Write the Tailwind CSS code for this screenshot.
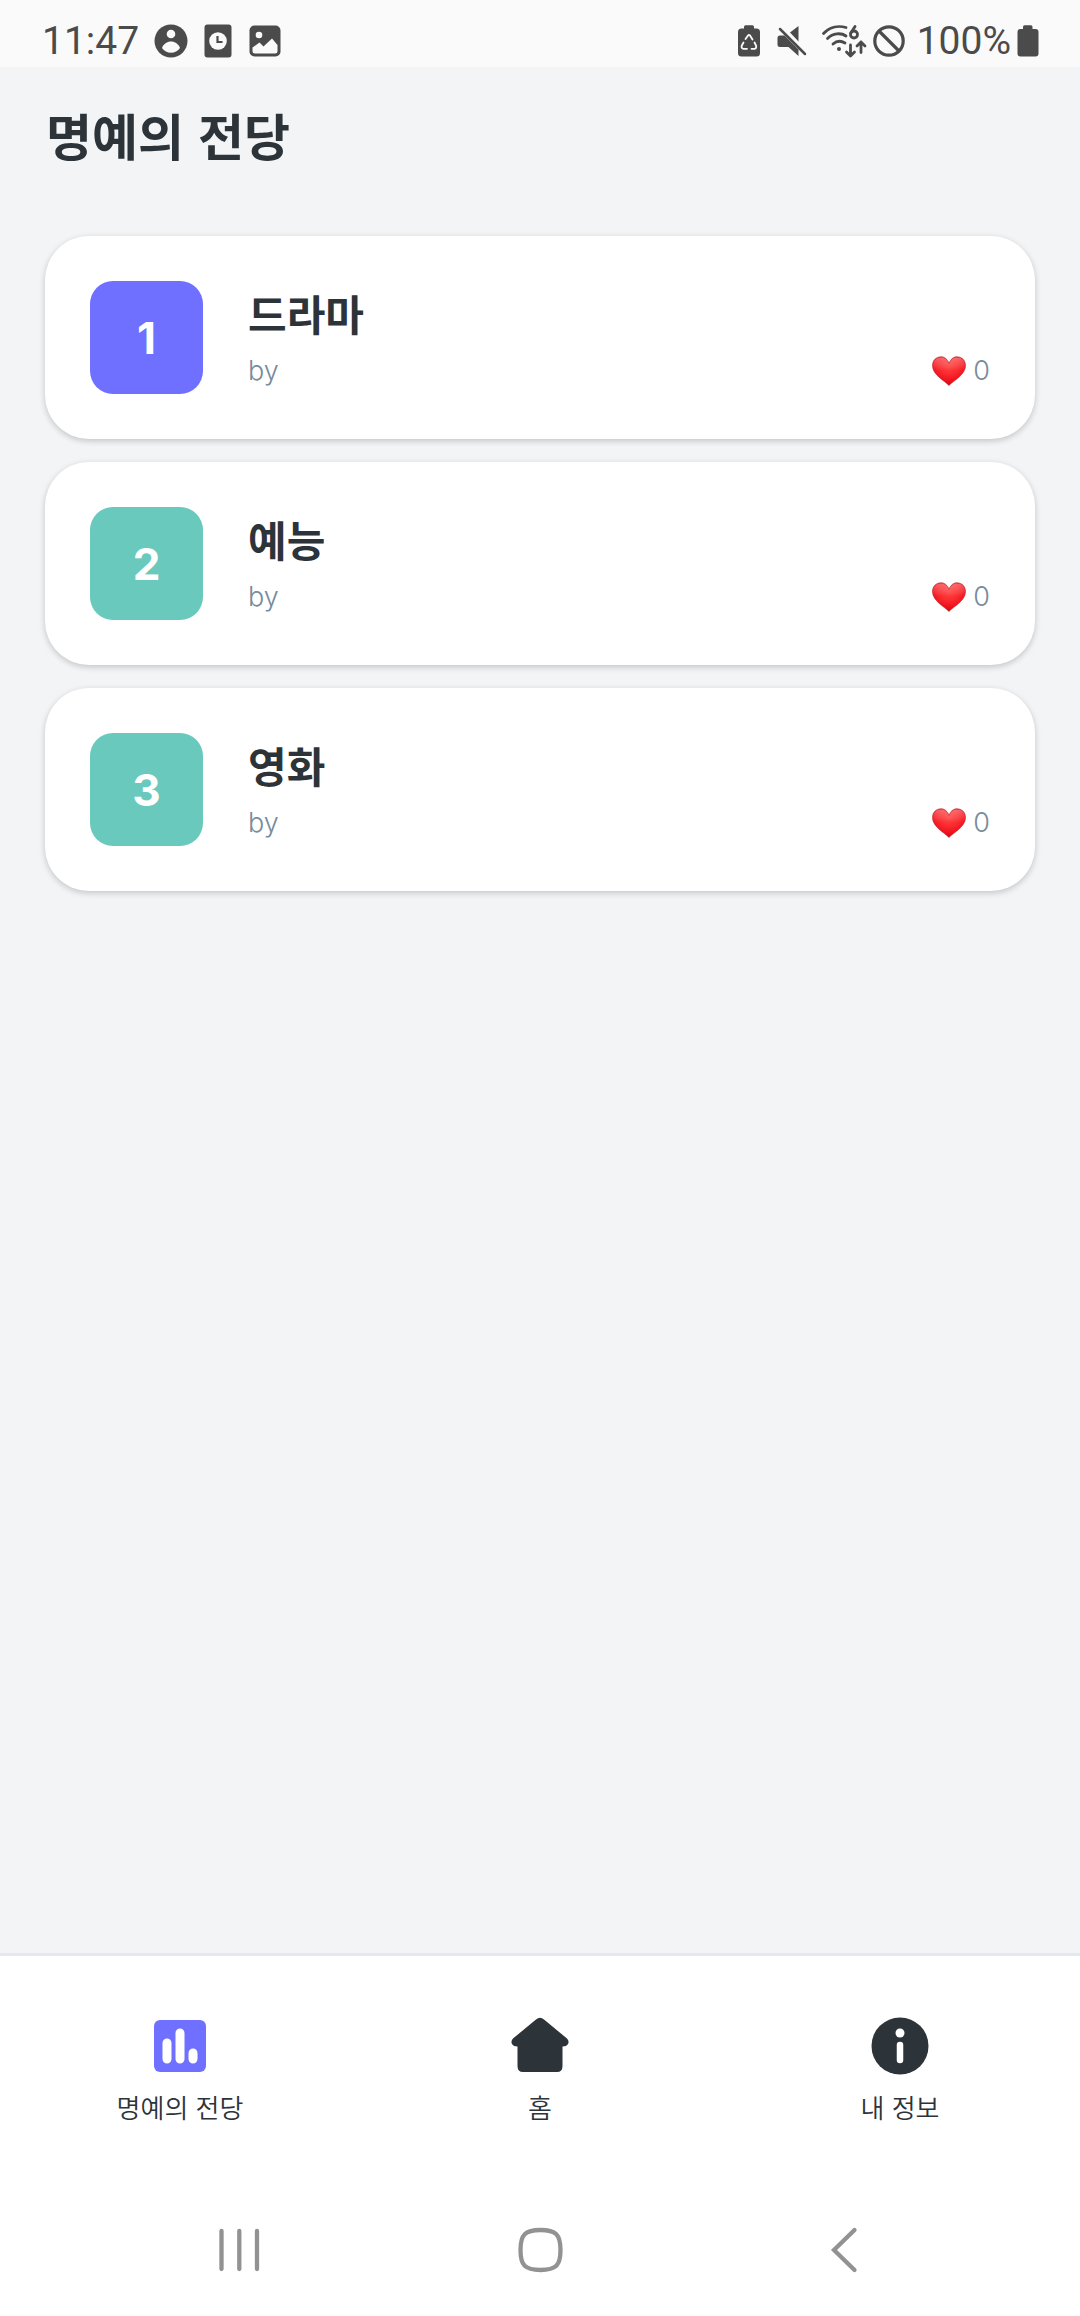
<!DOCTYPE html>
<html lang="ko">
<head>
<meta charset="utf-8">
<meta name="viewport" content="width=device-width, initial-scale=1">
<title>명예의 전당</title>
<script src="https://cdn.jsdelivr.net/npm/@tailwindcss/browser@4"></script>
</head>
<body class="flex min-h-screen flex-col bg-[#f3f4f6] font-['Noto_Sans_CJK_KR',sans-serif] text-[#2d3439]">
  <svg class="absolute size-0" aria-hidden="true">
    <defs>
      <radialGradient id="heartFill" cx="50%" cy="30%" r="75%">
        <stop offset="0" stop-color="#ff4545"/>
        <stop offset=".4" stop-color="#fa2c30"/>
        <stop offset=".75" stop-color="#ee0d1a"/>
        <stop offset="1" stop-color="#a80d12"/>
      </radialGradient>
      <linearGradient id="heartShine" x1="0" y1="0" x2="0" y2="1">
        <stop offset="0" stop-color="#fff" stop-opacity=".3"/>
        <stop offset=".45" stop-color="#fff" stop-opacity="0"/>
      </linearGradient>
      <symbol id="heart" viewBox="0 0 34 30">
        <path d="M17 29.500C13 25 .5 19 .5 9.500C.5 4.500 4 .8 9 .8C12.500 .8 15.500 3 17 7.500C18.500 3 21.500 .8 25 .8C30 .8 33.500 4.500 33.500 9.500C33.500 19 21 25 17 29.500Z" fill="url(#heartFill)" stroke="#b5282b" stroke-opacity=".7" stroke-width=".9"/>
        <path d="M17 29.500C13 25 1 19 1 9.500C1 4.500 4 1.500 9 1.500C12.500 1.500 15.500 3.500 17 8.500C18.500 3.500 21.500 1.500 25 1.500C30 1.500 33 4.500 33 9.500C33 19 21 25 17 29.500Z" fill="url(#heartShine)"/>
      </symbol>
    </defs>
  </svg>

  <div class="flex h-[67px] items-center justify-between bg-[#fafafa] pt-3.5 pr-[41px] pl-[42px] font-['Roboto',sans-serif] text-[39px] leading-[52px] text-[#4b4b4b]">
    <div class="flex items-center">
      <time class="w-[112px]">11:47</time>
      <svg class="h-[34px] w-[34px]" viewBox="0 0 34 34" fill="#4b4b4b" aria-hidden="true">
        <circle cx="17" cy="17" r="16.500"/>
        <circle cx="17" cy="10" r="4.300" fill="#fafafa"/>
        <path d="M8 24C9.500 20 13 17.500 17 17.500S24.500 20 26 24C24 27 20.500 28.800 17 28.800S10 27 8 24Z" fill="#fafafa"/>
      </svg>
      <svg class="ml-4 h-[34px] w-[28px]" viewBox="0 0 28 34" fill="#4b4b4b" aria-hidden="true">
        <rect x=".5" y=".5" width="27" height="33" rx="3"/>
        <circle cx="14" cy="17" r="8.800" fill="#fafafa"/>
        <path d="M13.500 12v6h5" fill="none" stroke="#4b4b4b" stroke-width="2.200"/>
      </svg>
      <svg class="ml-[17px] h-[32px] w-[32px]" viewBox="0 0 32 32" fill="#4b4b4b" aria-hidden="true">
        <rect x=".5" y=".5" width="31" height="31" rx="5"/>
        <circle cx="10" cy="10" r="3.300" fill="#fafafa"/>
        <path d="M3.500 22.500L10.500 17.500L14.500 21.500L23 13.500L28.500 20V26Q28.500 28.500 26 28.500H6Q3.500 28.500 3.500 26Z" fill="#fafafa"/>
      </svg>
    </div>
    <div class="flex items-center">
      <svg class="h-[32px] w-[22px]" viewBox="0 0 22 32" fill="#4b4b4b" aria-hidden="true">
        <path d="M6 3.500V2Q6 .3 7.500 .3H14.500Q16 .3 16 2V3.500H18.500Q22 3.500 22 7V28Q22 31.500 18.500 31.500H3.500Q0 31.500 0 28V7Q0 3.500 3.500 3.500Z"/>
        <g fill="none" stroke="#fafafa" stroke-width="1.800" stroke-linecap="round" stroke-linejoin="round">
          <path d="M7.500 14L10 10.500Q11 9.500 12 10.500L14.500 14.500"/><path d="M16.500 17.500L18 20.500Q18.800 23.500 16.500 23.800H13.500"/><path d="M9 23.800H5.500Q3 23.500 3.700 20.800L5.500 17.500"/>
        </g>
      </svg>
      <svg class="ml-[17px] h-[32px] w-[30px]" viewBox="0 0 30 32" fill="#4b4b4b" aria-hidden="true">
        <path d="M3 10.500H7.500L21.500 24.500V31L11.500 22H3Q.5 22 .5 19.500V13Q.5 10.500 3 10.500ZM13 7.500L21.500 1V16.500Z"/>
        <path d="M3 4L28 29" stroke="#4b4b4b" stroke-width="2.500" stroke-linecap="round"/>
      </svg>
      <svg class="ml-3.5 h-[34px] w-[46px]" viewBox="0 0 46 34" fill="none" stroke="#4b4b4b" stroke-width="2.800" stroke-linecap="round" stroke-linejoin="round" aria-hidden="true">
        <path d="M2.500 9.500C9 2.500 18 1.500 25 3.500M6.500 14.500C12 9 20 8.500 25 12M12 20C16 16.500 20 16.500 24 19"/>
        <circle cx="18" cy="25" r="2" fill="#4b4b4b" stroke="none"/>
        <circle cx="33" cy="10.500" r="3.500"/><path d="M29.800 9L34 2.500"/>
        <path d="M29.500 21V32M25.500 28L29.500 32L33.500 28M40 28.500V18M36 22L40 18L44 22"/>
      </svg>
      <svg class="ml-[5px] h-[34px] w-[34px]" viewBox="0 0 34 34" fill="none" stroke="#4b4b4b" stroke-width="3.200" aria-hidden="true">
        <circle cx="17" cy="17" r="14.200"/><path d="M7 7L27 27"/>
      </svg>
      <span class="ml-[11px]">100%</span>
      <svg class="ml-1.5 h-[32px] w-[22px]" viewBox="0 0 22 32" fill="#4b4b4b" aria-hidden="true">
        <path d="M6 4V2Q6 .3 7.500 .3H14Q15.500 .3 15.500 2V4H18.500Q21.500 4 21.500 7V28.500Q21.500 31.500 18.500 31.500H3.500Q.5 31.500 .5 28.500V7Q.5 4 3.500 4Z"/>
      </svg>
    </div>
  </div>

  <header class="px-[46px] pt-[30px] pb-[65px]">
    <h1 class="text-[50px] leading-[74px] font-bold">명예의 전당</h1>
  </header>

  <main class="flex-1 px-[45px]">
    <ol class="flex flex-col gap-[23px]">
      <li class="flex items-center gap-[45px] rounded-[44px] bg-white p-[45px] shadow-[0_2px_6px_rgba(0,0,0,0.2)]">
        <span class="flex size-[113px] items-center justify-center rounded-[23px] bg-[#6f70ff] font-['Inter',sans-serif] text-[44px] font-bold text-white">1</span>
        <div class="flex-1 pt-0.5">
          <h2 class="text-[42px] leading-[56px] font-bold">드라마</h2>
          <div class="flex items-center justify-between pt-2 font-['Inter',sans-serif] text-[27px] leading-[44px] font-light text-[#778b9b]">
            <span>by</span>
            <span class="flex items-center gap-[7px]"><svg class="h-[30px] w-[34px]" role="img" aria-label="좋아요"><use href="#heart"/></svg>0</span>
          </div>
        </div>
      </li>
      <li class="flex items-center gap-[45px] rounded-[44px] bg-white p-[45px] shadow-[0_2px_6px_rgba(0,0,0,0.2)]">
        <span class="flex size-[113px] items-center justify-center rounded-[23px] bg-[#69c9bd] font-['Inter',sans-serif] text-[44px] font-bold text-white">2</span>
        <div class="flex-1 pt-0.5">
          <h2 class="text-[42px] leading-[56px] font-bold">예능</h2>
          <div class="flex items-center justify-between pt-2 font-['Inter',sans-serif] text-[27px] leading-[44px] font-light text-[#778b9b]">
            <span>by</span>
            <span class="flex items-center gap-[7px]"><svg class="h-[30px] w-[34px]" role="img" aria-label="좋아요"><use href="#heart"/></svg>0</span>
          </div>
        </div>
      </li>
      <li class="flex items-center gap-[45px] rounded-[44px] bg-white p-[45px] shadow-[0_2px_6px_rgba(0,0,0,0.2)]">
        <span class="flex size-[113px] items-center justify-center rounded-[23px] bg-[#69c9bd] font-['Inter',sans-serif] text-[44px] font-bold text-white">3</span>
        <div class="flex-1 pt-0.5">
          <h2 class="text-[42px] leading-[56px] font-bold">영화</h2>
          <div class="flex items-center justify-between pt-2 font-['Inter',sans-serif] text-[27px] leading-[44px] font-light text-[#778b9b]">
            <span>by</span>
            <span class="flex items-center gap-[7px]"><svg class="h-[30px] w-[34px]" role="img" aria-label="좋아요"><use href="#heart"/></svg>0</span>
          </div>
        </div>
      </li>
    </ol>
  </main>

  <nav class="grid grid-cols-3 border-t-3 border-[#e3e9ee] bg-white pt-[56px] pb-[57px] text-[26px] leading-[40px] font-[350]">
    <a href="#hall" aria-current="page" class="flex flex-col items-center gap-[7px]">
      <svg class="size-[68px]" viewBox="0 0 68 68" aria-hidden="true">
        <rect x="8" y="8" width="52" height="52" rx="6" fill="#6f70ff"/>
        <path d="M21 31V47M34 21V47M47 41V47" stroke="#fff" stroke-width="9" stroke-linecap="round"/>
      </svg>
      <span>명예의 전당</span>
    </a>
    <a href="#home" class="flex flex-col items-center gap-[7px]">
      <svg class="size-[68px]" viewBox="0 0 68 68" fill="#2d3439" aria-hidden="true">
        <path d="M30 7.500Q34 4 38 7.500L61 26.500Q63.500 29.500 62 32Q60.500 34.500 56.500 34.500V54Q56.500 60 51 60H17Q11.500 60 11.500 54V34.500Q7.500 34.500 6 32Q4.500 29.500 7 26.500Z"/>
      </svg>
      <span>홈</span>
    </a>
    <a href="#me" class="flex flex-col items-center gap-[7px]">
      <svg class="size-[68px]" viewBox="0 0 68 68" aria-hidden="true">
        <circle cx="34" cy="34" r="28.500" fill="#2d3439"/>
        <circle cx="34" cy="21" r="4.500" fill="#fff"/>
        <path d="M34 33V48" stroke="#fff" stroke-width="6.500" stroke-linecap="round"/>
      </svg>
      <span>내 정보</span>
    </a>
  </nav>

  <div class="grid h-[132px] grid-cols-3 items-center bg-white px-[88px] text-[#929292]">
    <button type="button" aria-label="최근 앱" class="flex justify-center">
      <svg class="size-[48px]" viewBox="0 0 48 48" fill="none" stroke="currentColor" stroke-width="4.300" stroke-linecap="round"><path d="M6.500 5V43M24.300 5V43M42 5V43"/></svg>
    </button>
    <button type="button" aria-label="홈" class="flex justify-center">
      <svg class="size-[48px]" viewBox="0 0 48 48" fill="none" stroke="currentColor" stroke-width="4.300"><path d="M24.500 4C40 4 44.500 8.500 44.500 24S40 44 24.500 44S4.500 39.500 4.500 24S9 4 24.500 4Z"/></svg>
    </button>
    <button type="button" aria-label="뒤로" class="flex justify-center">
      <svg class="size-[48px]" viewBox="0 0 48 48" fill="none" stroke="currentColor" stroke-width="4.300" stroke-linecap="round" stroke-linejoin="miter"><path d="M37.500 4L17 24L37.500 44"/></svg>
    </button>
  </div>
</body>
</html>
